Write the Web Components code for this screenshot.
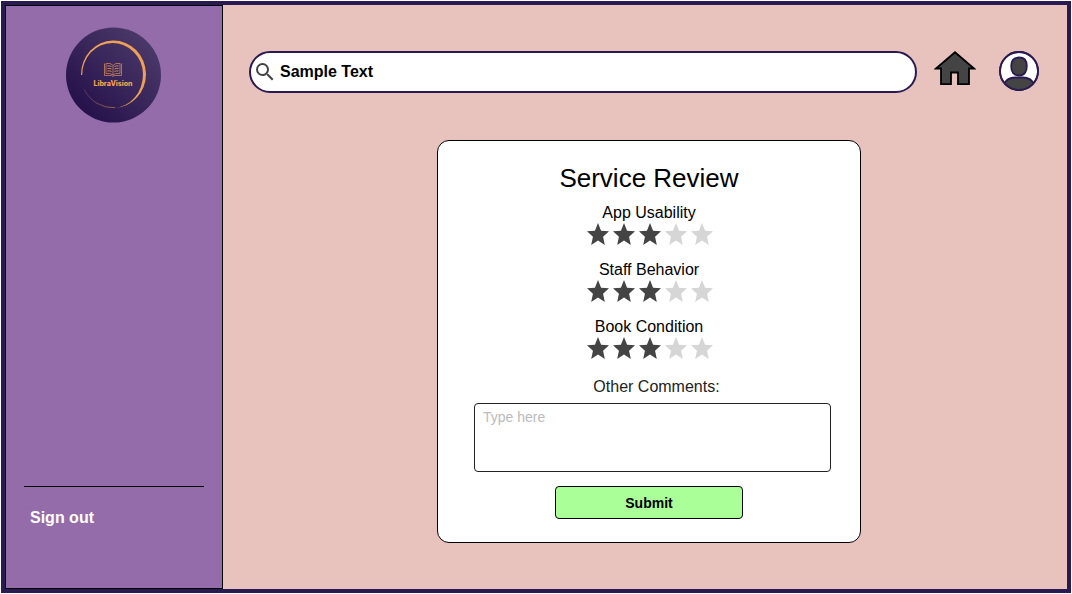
<!DOCTYPE html>
<html lang="en">
<head>
<meta charset="utf-8">
<title>LibraVision – Service Review</title>
<style>
  body { margin: 1px; font: 16px/18px "Liberation Sans", Arial, sans-serif; color: #000; background: #fff; }
</style>
</head>
<body>
<app-shell>
  <side-bar slot="side"><brand-logo></brand-logo><a slot="footer" href="#signout">Sign out</a></side-bar>
  <tool-bar></tool-bar>
  <review-card heading="Service Review">
    <star-rating label="App Usability" value="3"></star-rating>
    <star-rating label="Staff Behavior" value="3"></star-rating>
    <star-rating label="Book Condition" value="3"></star-rating>
  </review-card>
</app-shell>

<template id="app-shell">
  <style>
    :host { display: grid; grid-template-columns: 218px minmax(0, 1fr); box-sizing: border-box; min-height: calc(100vh - 2px); border: 4px solid #2a1a52; background: #e8c2bd; }
    main { display: flex; flex-direction: column; gap: 47px; padding: 46px 28px 46px 26px; }
  </style>
  <slot name="side"></slot>
  <main><slot></slot></main>
</template>

<template id="side-bar">
  <style>
    :host { display: flex; flex-direction: column; justify-content: space-between; box-sizing: border-box; padding: 21px 18px 61px; border: 1px solid #000; background: #946caa; }
    nav { border-top: 1px solid #000; padding: 22px 6px 0; }
    ::slotted(a) { color: #fff; font-weight: bold; text-decoration: none; }
  </style>
  <slot></slot>
  <nav><slot name="footer"></slot></nav>
</template>

<template id="brand-logo">
  <style>
    :host { display: flex; justify-content: center; }
    svg { display: block; width: 96px; height: 96px; }
    text { font: 800 7px Inter, sans-serif; fill: #f2a155; }
  </style>
  <svg viewBox="0 0 96 96" role="img" aria-label="LibraVision logo">
    <defs>
      <linearGradient id="disc" x1="0.15" y1="0.85" x2="0.85" y2="0.15"><stop offset="0" stop-color="#26124b"/><stop offset="1" stop-color="#4a3868"/></linearGradient>
      <linearGradient id="fade" gradientUnits="userSpaceOnUse" x1="18" y1="62" x2="50" y2="81"><stop offset="0" stop-color="#e99a58" stop-opacity=".25"/><stop offset="1" stop-color="#e99a58" stop-opacity=".7"/></linearGradient>
    </defs>
    <circle cx="47.500" cy="48" r="47.500" fill="url(#disc)"/>
    <path d="M15 48 A32.500 34 0 0 1 80 47 A32.500 34 0 0 1 48 81 A30 33.500 0 0 0 77 47 A30.400 31.500 0 0 0 16.200 48Z" fill="#eda057"/>
    <path d="M18 62 A32.500 33.500 0 0 0 49 80.700" fill="none" stroke="url(#fade)" stroke-width=".8"/>
    <g fill="none" stroke="#c9835a" stroke-width=".8" transform="translate(-1 0)">
      <path d="M39.500 36.500V48.500H46.500L48 49.500L49.500 48.500H56.500V36.500M48 38.500V48M41 36.500Q46 35.500 48 38.500Q50 35.500 55 36.500V46.500Q50 46 48 48Q46 46 41 46.500Z"/>
      <path d="M42.500 39Q45 38.500 46.500 39.500M42.500 41.500Q45 41 46.500 42M42.500 44Q45 43.500 46.500 44.500M53.500 39Q51 38.500 49.500 39.500M53.500 41.500Q51 41 49.500 42M53.500 44Q51 43.500 49.500 44.500" stroke="#f2a155"/>
    </g>
    <text x="47" y="59" text-anchor="middle">LibraVision</text>
  </svg>
</template>

<template id="tool-bar">
  <style>
    :host { display: flex; align-items: flex-start; }
    form { flex: 1; min-width: 0; display: flex; align-items: center; gap: 3px; box-sizing: border-box; height: 42px; margin-right: 17px; padding: 0 20px 0 2px; border: 2px solid #2a1a52; border-radius: 21px; background: #fff; }
    form svg { flex: none; }
    input { flex: 1; min-width: 0; padding: 0; border: 0; outline: 0; background: none; font: bold 16px/18px "Liberation Sans", Arial, sans-serif; color: #000; }
    svg { display: block; }
    a { margin-right: 23px; }
    button { padding: 0; border: 0; background: none; }
  </style>
  <form role="search">
    <svg width="24" height="24" viewBox="0 0 24 24" fill="#444" aria-hidden="true"><path d="M15.500 14h-.79l-.28-.27A6.470 6.470 0 0 0 16 9.500 6.500 6.500 0 1 0 9.500 16c1.610 0 3.090-.59 4.230-1.570l.27.28v.79l5 4.990L20.490 19l-4.990-5zm-6 0C7.010 14 5 11.990 5 9.500S7.010 5 9.500 5 14 7.010 14 9.500 11.990 14 9.500 14z"/></svg>
    <input type="text" aria-label="Search" value="Sample Text">
  </form>
  <a href="#home" aria-label="Home">
    <svg width="42" height="35" viewBox="0 0 42 35"><path d="M21 1.200L40 17.500H35V33.200H24V21.500H17V33.200H7V17.500H2Z" fill="#444" stroke="#000" stroke-width="1.800"/></svg>
  </a>
  <button type="button" aria-label="Account">
    <svg width="40" height="40" viewBox="0 0 40 40" stroke="#2a1a52" stroke-width="1.800">
      <defs><clipPath id="face"><circle cx="20" cy="20" r="19.500"/></clipPath></defs>
      <circle cx="20" cy="20" r="19" fill="#fff"/>
      <g fill="#444"><path clip-path="url(#face)" d="M5 40V33C8 27 12 26.500 16 26.500H24C28 26.500 32 27 35 33V40Z"/>
      <path d="M20 6.500C25.500 6.500 27.800 9.500 27.800 15C27.800 21 25.500 24.500 20 24.500C14.500 24.500 12.200 21 12.200 15C12.200 9.500 14.500 6.500 20 6.500Z"/></g>
      <circle cx="20" cy="20" r="19" fill="none"/>
    </svg>
  </button>
</template>

<template id="review-card">
  <style>
    :host { display: flex; justify-content: center; padding-left: 10px; }
    form { flex: 0 1 424px; min-width: 0; box-sizing: border-box; display: flex; flex-direction: column; padding: 22px 0 23px; border: 1px solid #000; border-radius: 12px; background: #fff; }
    h1 { margin: 0 0 11px; font-size: 26px; line-height: 30px; font-weight: normal; text-align: center; }
    .ratings { display: flex; flex-direction: column; gap: 16px; }
    .comments { display: flex; flex-direction: column; gap: 7px; margin: 19px 29px 14px 36px; }
    label { padding-left: 8px; text-align: center; color: #222; }
    textarea { display: block; box-sizing: border-box; width: 100%; height: 69px; margin: 0; padding: 5px 8px; border: 1px solid #222; border-radius: 4px; resize: none; background: #fff; font: 14px/16px "Liberation Sans", Arial, sans-serif; color: #222; }
    textarea::placeholder { color: #bbb; opacity: 1; }
    button { align-self: center; width: 188px; height: 33px; padding: 0; border: 1px solid #000; border-radius: 4px; background: #aaff99; font: bold 14px/16px "Liberation Sans", Arial, sans-serif; color: #000; }
  </style>
  <form>
    <h1></h1>
    <div class="ratings"><slot></slot></div>
    <div class="comments">
      <label for="comments">Other Comments:</label>
      <textarea id="comments" placeholder="Type here"></textarea>
    </div>
    <button type="submit">Submit</button>
  </form>
</template>

<template id="star-rating">
  <style>
    :host { display: block; }
    fieldset { margin: 0; padding: 0; border: 0; min-width: 0; }
    legend { width: 100%; padding: 0; text-align: center; }
    .stars { display: flex; justify-content: center; gap: 4px; padding: 1px 0 0 2px; }
    input { appearance: none; width: 22px; height: 22px; margin: 0; background: #444; clip-path: polygon(50% 0, 64% 35%, 100% 38%, 73% 63%, 81% 100%, 50% 80%, 19% 100%, 27% 63%, 0 38%, 36% 35%); }
    input:checked ~ input { background: #d6d6d6; }
  </style>
  <fieldset><legend></legend><div class="stars"></div></fieldset>
</template>

<script>
  class TemplateElement extends HTMLElement {
    constructor() {
      super();
      this.attachShadow({ mode: "open" })
        .append(document.getElementById(this.localName).content.cloneNode(true));
    }
  }

  class ReviewCard extends TemplateElement {
    connectedCallback() {
      this.shadowRoot.querySelector("h1").textContent = this.getAttribute("heading");
      this.shadowRoot.querySelector("form").addEventListener("submit", e => e.preventDefault());
    }
  }

  class StarRating extends TemplateElement {
    connectedCallback() {
      this.shadowRoot.querySelector("legend").textContent = this.getAttribute("label");
      const value = Number(this.getAttribute("value"));
      const stars = [1, 2, 3, 4, 5].map(n => {
        const star = document.createElement("input");
        star.type = "radio";
        star.name = "rating";
        star.value = n;
        star.checked = n === value;
        star.setAttribute("aria-label", n + " of 5");
        return star;
      });
      this.shadowRoot.querySelector(".stars").replaceChildren(...stars);
    }
  }

  for (const name of ["app-shell", "side-bar", "brand-logo", "tool-bar"]) {
    customElements.define(name, class extends TemplateElement {});
  }
  customElements.define("review-card", ReviewCard);
  customElements.define("star-rating", StarRating);
</script>
</body>
</html>
